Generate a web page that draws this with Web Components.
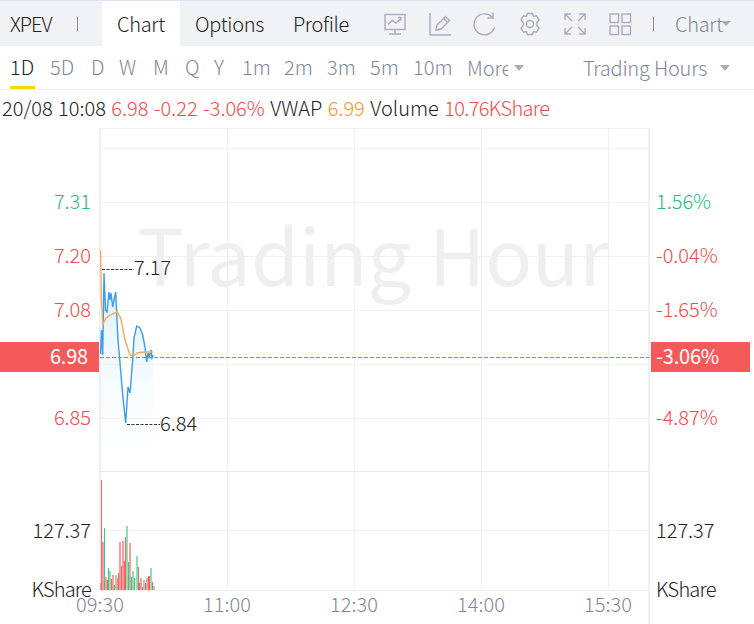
<!DOCTYPE html>
<html>
<head>
<meta charset="utf-8">
<style>
  html, body { margin: 0; background: #fff; }
  body { font-family: 'Noto Sans CJK SC', 'Noto Sans', sans-serif; font-weight: 300; color: #222; width: 754px; height: 624px; overflow: hidden; }
</style>
</head>
<body>
<stock-app></stock-app>
<script>
class StockApp extends HTMLElement {
    connectedCallback() {
        this.attachShadow({ mode: 'open' });
        this.shadowRoot.innerHTML = `
            <style>
                :host { display: flex; flex-direction: column; width: 754px; height: 624px; }
            </style>
            <stock-toolbar></stock-toolbar>
            <period-bar></period-bar>
            <quote-line></quote-line>
            <trade-chart></trade-chart>
        `;
    }
}

class StockToolbar extends HTMLElement {
    connectedCallback() {
        this.attachShadow({ mode: 'open' });
        this.shadowRoot.innerHTML = `
            <style>
                :host { display: flex; align-items: stretch; height: 45px; background: #f0f2f5; border-top: 1px solid #dde5f2; font-size: 20px; line-height: 24px; color: #222; }
                .symbol { width: 67px; padding-left: 10px; display: flex; align-items: center; letter-spacing: -1px; }
                .sep { width: 1px; height: 14px; background: #8d96a8; align-self: center; }
                .sep.first { margin-right: 24px; }
                .tab { display: flex; align-items: center; justify-content: center; letter-spacing: -0.3px; }
                .tab.on { background: #fff; width: 78px; }
                .tab.opt { width: 99px; }
                .tab.pro { width: 84px; }
                .icons { display: flex; align-items: center; gap: 21px; margin-left: 20px; }
                svg { display: block; width: 24px; height: 24px; fill: none; stroke: #a9adba; stroke-width: 1.4; }
                .sep.last { margin: 0 21px 0 21px; }
                .menu { display: flex; align-items: center; color: #7f889b; letter-spacing: -0.3px; }
                .caret { width: 0; height: 0; border: 5px solid transparent; border-top: 5px solid #a9adba; border-bottom: 0; margin-left: -2px; }
            </style>
            <div class="symbol">XPEV</div>
            <div class="sep first"></div>
            <div class="tab on">Chart</div>
            <div class="tab opt">Options</div>
            <div class="tab pro">Profile</div>
            <div class="icons">
                <svg viewBox="0 0 24 24"><rect x="2" y="2.5" width="20" height="15"/><path d="M12 17.5v4.500M6 22h12M5 12.500l4.500-4 3.500 2.500 5.500-5M15 5.500h3v3"/></svg>
                <svg viewBox="0 0 24 24"><path d="M2 1v22h21M8 18l1-5L17.500 4.500l4 4L13 17zM15.500 6.500l4 4"/></svg>
                <svg viewBox="0 0 24 24"><path d="M21.500 15.500A10.500 10.500 0 1 1 19 5M20 .5V6h-5.500"/></svg>
                <svg viewBox="0 0 24 24"><path d="M9.500 1.500h5l1 3 3-.8 2.500 4.300-2.200 2.500v3l2.200 2.500-2.500 4.300-3-.8-1 3h-5l-1-3-3 .8L3 16l2.200-2.500v-3L3 8l2.500-4.300 3 .8z"/><circle cx="12" cy="12" r="3.500"/></svg>
                <svg viewBox="0 0 24 24"><path d="M2 8V2h6M2 2l7 7M22 8V2h-6M22 2l-7 7M2 16v6h6M2 22l7-7M22 16v6h-6M22 22l-7-7"/></svg>
                <svg viewBox="0 0 24 24"><rect x="2" y="2" width="8.500" height="8.500"/><rect x="14" y="2" width="8.500" height="8.500"/><rect x="2" y="14" width="8.500" height="8.500"/><rect x="14" y="14" width="8.500" height="8.500"/></svg>
            </div>
            <div class="sep last"></div>
            <div class="menu">Chart<span class="caret"></span></div>
        `;
    }
}

class PeriodBar extends HTMLElement {
    connectedCallback() {
        this.attachShadow({ mode: 'open' });
        // label, width of its slot
        const items = [['5D', 41], ['D', 28], ['W', 34], ['M', 32], ['Q', 29], ['Y', 28], ['1m', 42], ['2m', 43], ['3m', 43], ['5m', 43], ['10m', 54]];
        this.shadowRoot.innerHTML = `
            <style>
                :host { display: flex; align-items: center; height: 43px; border-bottom: 1px solid #eeeff1; font-size: 20px; color: #7f889b; padding-left: 10px; }
                .item { height: 43px; line-height: 42px; box-sizing: border-box; flex: none; white-space: nowrap; }
                .item.on { color: #222; border-bottom: 3px solid #fcd500; width: 25px; margin-right: 15px; }
                .more { width: 41px; overflow: hidden; white-space: nowrap; }
                .caret { width: 0; height: 0; border: 5px solid transparent; border-top: 6px solid #a9adba; border-bottom: 0; margin-top: 1px; }
                .more-caret { margin-left: 6px; }
                .hours { margin-left: auto; letter-spacing: -0.2px; }
                .hours-caret { margin: 1px 24px 0 13px; }
            </style>
            <div class="item on">1D</div>
            ${items.map(t => `<div class="item" style="width:${t[1]}px">${t[0]}</div>`).join('')}
            <div class="more">More</div>
            <span class="caret more-caret"></span>
            <div class="hours">Trading Hours</div>
            <span class="caret hours-caret"></span>
        `;
    }
}

class QuoteLine extends HTMLElement {
    connectedCallback() {
        this.attachShadow({ mode: 'open' });
        this.shadowRoot.innerHTML = `
            <style>
                :host { display: block; height: 38px; line-height: 36px; padding-left: 2px; font-size: 20px; color: #222; white-space: nowrap; word-spacing: 1px; }
                .down { color: #f24a4a; }
                .avg { color: #f79326; }
                .tail { letter-spacing: -0.65px; }
            </style>
            20/08 10:08 <span class="down">6.98 -0.22 -3.06%</span> VWAP <span class="avg">6.99</span> Volume <span class="down tail">10.76KShare</span>
        `;
    }
}

class TradeChart extends HTMLElement {
    connectedCallback() {
        this.attachShadow({ mode: 'open' });
        const blue = '100.500,354 101.500,330 102.700,355 104,273 105.500,310 107,312 109,292 110,300 111,293 112.700,307 114,300 115.700,292 118,340 120,363 123,398 125.700,423 128,387 130,393 132.700,360 134,338 136.700,326 138.500,327 140,328 142.700,335 145,347 146.700,362 148,353 149.300,357 151,350 152,358 153.300,355';
        const avg = '100.500,250 101.500,300 102.700,325 106,318 110,315 117,312 120.700,318 125,340 130,355 133,356 138,352.700 145,352 153,352';
        // x, top, colour, width
        const bars = [
            [100, 583, 'r', 2], [101, 480, 'R', 1], [102, 542, 'r', 2], [104, 528, 'G', 1],
            [105, 577, 'r', 2], [107, 580, 'R', 1], [108, 568, 'G', 1], [109, 571, 'g', 2],
            [111, 579, 'R', 1], [112, 575, 'r', 2], [114, 585, 'G', 1], [115, 575, 'g', 2],
            [116, 578, 'r', 2], [118, 573, 'R', 1], [119, 542, 'r', 2], [121, 566, 'R', 1],
            [122, 541, 'r', 2], [124, 561, 'R', 1], [125, 537, 'R', 1], [126, 526, 'g', 2],
            [128, 562, 'G', 1], [129, 543, 'r', 2], [131, 577, 'G', 1], [132, 571, 'g', 2],
            [134, 578, 'G', 1], [136, 556, 'g', 2], [138, 567, 'R', 1], [139, 583, 'R', 1],
            [140, 578, 'r', 2], [142, 587, 'R', 1], [143, 580, 'g', 2], [145, 583, 'R', 1],
            [146, 578, 'r', 2], [148, 576, 'R', 2], [150, 568, 'g', 2], [152, 582, 'R', 1],
            [153, 586, 'g', 2]
        ];
        const colours = { r: '#fa9c9c', R: '#f4625f', g: '#8ddfb8', G: '#35c98a' };
        const vLines = [227, 354, 481, 608];
        const hLines = [148, 202, 256, 310, 364, 418, 530];
        const left = [[202, '7.31', 'up'], [256, '7.20', 'dn'], [310, '7.08', 'dn'], [418, '6.85', 'dn']];
        const right = [[202, '1.56%', 'up'], [256, '-0.04%', 'dn'], [310, '-1.65%', 'dn'], [418, '-4.87%', 'dn']];
        const times = [[100, '09:30'], [227, '11:00'], [354, '12:30'], [481, '14:00'], [608, '15:30']];
        this.shadowRoot.innerHTML = `
            <style>
                :host { display: block; width: 754px; height: 496px; }
                svg { display: block; }
                text { font-size: 20px; fill: #222; }
                .up { fill: #22c07f; }
                .dn { fill: #f24a4a; }
                .time { fill: #7f889b; text-anchor: middle; }
                .mark { font-size: 77.500px; font-weight: 400; fill: #efefef; }
                .white { fill: #fff; font-weight: 400; letter-spacing: -0.2px; }
                .unit { letter-spacing: -0.8px; }
            </style>
            <svg width="754" height="496" viewBox="0 128 754 496">
                <defs>
                    <linearGradient id="fade" x1="0" y1="0" x2="0" y2="1">
                        <stop offset="0" stop-color="#d9f0fd"/>
                        <stop offset="1" stop-color="#f7fcff" stop-opacity="0"/>
                    </linearGradient>
                </defs>
                <text class="mark" x="137" y="286">Trading Hour</text>
                <g fill="none" stroke="#f0f0f0" stroke-width="1">
                    ${hLines.map(y => `<path d="M100 ${y + .5}H649"/>`).join('')}
                    ${vLines.map(x => `<path d="M${x + .5} 128V590"/>`).join('')}
                </g>
                <g fill="none" stroke="#f0f0f0" stroke-width="2">
                    <path d="M100 128V590"/>
                    <path d="M649 128V624"/>
                    <path d="M99 128H650"/>
                </g>
                <path d="M99 471.500H650" stroke="#ebebeb"/>
                <path d="M99 590.500H649" stroke="#eeeeee"/>
                <polygon points="${blue} 153.300,470 100.500,470" fill="url(#fade)"/>
                <polyline points="${blue}" fill="none" stroke="#3a9bf0" stroke-width="1.400"/>
                <polyline points="${avg}" fill="none" stroke="#f7a95c" stroke-width="1.400"/>
                <path d="M100 357.500H649" stroke="#e86464" stroke-dasharray="4 2"/>
                ${bars.map(b => `<rect x="${b[0]}" y="${b[1]}" width="${b[3]}" height="${590 - b[1]}" fill="${colours[b[2]]}"/>`).join('')}
                <path d="M102 269.500H134M127 424.500H160" stroke="#333" stroke-dasharray="3 1.500"/>
                <text x="134" y="275">7.17</text>
                <text x="160" y="431">6.84</text>
                ${left.map(l => `<text class="${l[2]}" x="91" y="${l[0] + 7}" text-anchor="end">${l[1]}</text>`).join('')}
                ${right.map(r => `<text class="${r[2]}" x="656" y="${r[0] + 7}">${r[1]}</text>`).join('')}
                <rect x="0" y="342" width="99" height="30" fill="#f55a5a"/>
                <rect x="651" y="342" width="99" height="30" fill="#f55a5a"/>
                <text class="white" x="88" y="364" text-anchor="end">6.98</text>
                <text class="white" x="656" y="364">-3.06%</text>
                <text x="91" y="538" text-anchor="end">127.37</text>
                <text x="656" y="538">127.37</text>
                <text class="unit" x="91" y="597" text-anchor="end">KShare</text>
                <text class="unit" x="656" y="597">KShare</text>
                ${times.map(t => `<text class="time" x="${t[0]}" y="612">${t[1]}</text>`).join('')}
            </svg>
        `;
    }
}

customElements.define('stock-toolbar', StockToolbar);
customElements.define('period-bar', PeriodBar);
customElements.define('quote-line', QuoteLine);
customElements.define('trade-chart', TradeChart);
customElements.define('stock-app', StockApp);
</script>
</body>
</html>
